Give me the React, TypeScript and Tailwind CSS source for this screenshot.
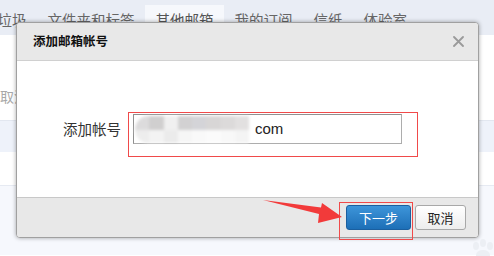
import React from "react";

const tabs = ["垃圾", "文件夹和标签", "其他邮箱", "我的订阅", "信纸", "体验室"];

const mosaicTop = ["#dcdbdc", "#d0cfcf", "#f0f0f0", "#d2d1d2", "#d4d4d8", "#d8d6d6", "#dcdada", "#e2e0e0"];
const mosaicBottom = ["#ededed", "#f3f3f3", "#ebebeb", "#f6f6f6", "#f9f9f9", "#fbfbfb", "#f8f8f8", "#f4f4f4"];

export default function App() {
  return (
    <div
      className="relative w-[494px] h-[256px] overflow-hidden bg-white"
      style={{ fontFamily: '"Noto Sans CJK SC", "Liberation Sans", sans-serif' }}
    >
      {/* background page */}
      <div className="flex h-[35px] items-end bg-[#e9edf5] pl-0">
        <div className="flex ml-[-13px]">
          {tabs.map((t) => (
            <div
              key={t}
              className={
                t === "其他邮箱"
                  ? "h-[30px] px-[10.5px] flex items-center text-[14.5px] text-[#555] bg-[#f6f8fc] whitespace-nowrap"
                  : "h-[30px] px-[10.5px] flex items-center text-[14.5px] text-[#666] whitespace-nowrap"
              }
            >
              {t}
            </div>
          ))}
        </div>
      </div>
      <div className="h-[85px] flex items-end pb-[17px]">
        <span className="text-[14px] text-[#a8a8a8] leading-none">取消</span>
      </div>
      <div className="h-[32px] bg-[#eef2fa] border-t border-[#e2e7f0]" />
      <div className="h-[33px] bg-white" />
      <div className="h-[70px] bg-[#f6f8fd] border-t border-[#e6eaf2]" />

      {/* paw watermark */}
      <svg className="absolute left-[470px] top-[238px]" width="26" height="20" viewBox="0 0 26 20">
        <g fill="#eceff4">
          <ellipse cx="6" cy="8" rx="3" ry="4" />
          <ellipse cx="13" cy="5" rx="3" ry="4" />
          <ellipse cx="20" cy="8" rx="3" ry="4" />
          <ellipse cx="13" cy="17" rx="7" ry="5" />
        </g>
      </svg>

      {/* dialog */}
      <div className="absolute left-[16px] top-[22px] w-[463px] h-[216px] flex flex-col border border-[#a0a0a0] rounded-[4px] overflow-hidden bg-white shadow-[0_0_4px_rgba(0,0,0,0.35)]">
        <div className="h-[38px] shrink-0 bg-[#e8e8e8] border-b border-[#d0d0d0] flex items-center justify-between pl-[16px] pr-[14px]">
          <span className="text-[12.5px] font-bold text-[#111]">添加邮箱帐号</span>
          <svg width="11" height="11" viewBox="0 0 11 11">
            <path d="M1 1 L10 10 M10 1 L1 10" stroke="#9a9a9a" strokeWidth="1.8" strokeLinecap="round" />
          </svg>
        </div>
        <div className="flex-1 bg-white flex items-start pt-[53px] pl-[46px]">
          <div className="h-[30px] flex items-center text-[14.5px] text-[#333] mr-[12px]">添加帐号</div>
          <div className="w-[269px] h-[30px] border border-[#adadad] border-t-[#909090] border-l-[#909090] flex items-center">
            <div className="ml-[1px] w-[114px] h-[27px] flex flex-col blur-[1.5px] rounded-l-full overflow-hidden">
              <div className="flex h-[14px]">
                {mosaicTop.map((c, i) => (
                  <div key={i} className="flex-1" style={{ backgroundColor: c }} />
                ))}
              </div>
              <div className="flex h-[13px]">
                {mosaicBottom.map((c, i) => (
                  <div key={i} className="flex-1" style={{ backgroundColor: c }} />
                ))}
              </div>
            </div>
            <span
              className="ml-[6px] text-[15px] text-[#222]"
              style={{ fontFamily: '"Liberation Sans", "Noto Sans CJK SC", sans-serif' }}
            >
              com
            </span>
          </div>
        </div>
        <div className="h-[40px] shrink-0 bg-[#e8e8e8] border-t border-[#c8c8c8] flex items-start justify-end pt-[7px] pr-[12px] gap-[4px]">
          <button className="w-[65px] h-[25px] rounded-[3px] border border-[#1b5f9f] bg-gradient-to-b from-[#3d95d9] to-[#1d6fb7] text-white text-[13px] flex items-center justify-center">
            下一步
          </button>
          <button className="w-[51px] h-[25px] rounded-[3px] border border-[#a8a8a8] bg-gradient-to-b from-white to-[#ededed] text-[#222] text-[13px] flex items-center justify-center">
            取消
          </button>
        </div>
      </div>

      {/* annotations */}
      <div className="absolute left-[128px] top-[112px] w-[290px] h-[45px] border-[1.5px] border-[#f04a4a]" />
      <div className="absolute left-[339px] top-[202px] w-[74px] h-[38px] border-[1.5px] border-[#f04a4a]" />
      <svg className="absolute left-0 top-0" width="494" height="256" viewBox="0 0 494 256">
        <polygon
          points="263,200 321,207.5 322,203 342,217 318,223 319,214"
          fill="#f23a3a"
        />
      </svg>
    </div>
  );
}
